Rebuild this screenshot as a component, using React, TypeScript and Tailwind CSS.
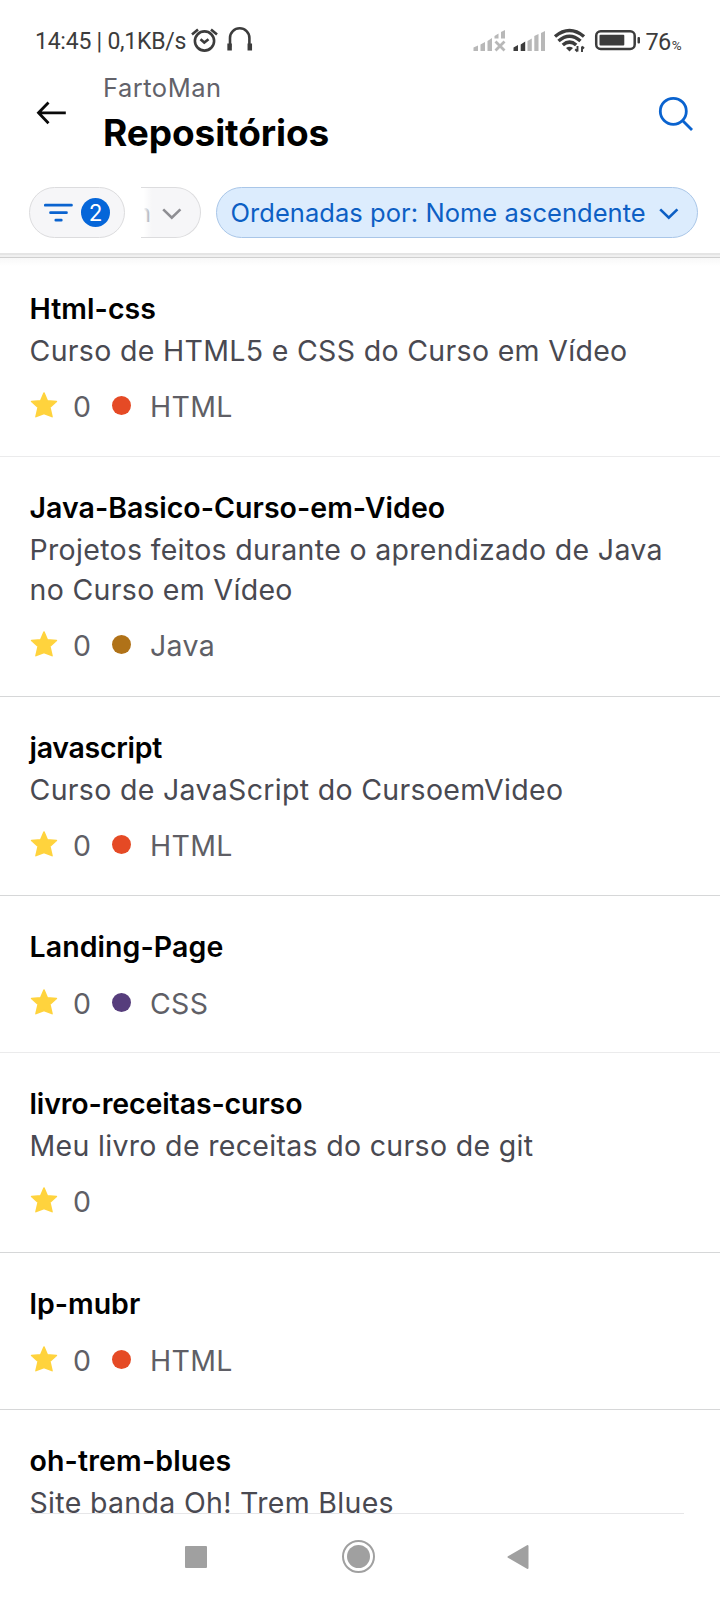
import React from "react";

type Repo = {
  name: string;
  tracking: string;
  desc?: string;
  stars?: number;
  lang?: string;
  dot?: string;
  box: string;
};

const repos: Repo[] = [
  { name: "Html-css", tracking: "tracking-[0.06px]", desc: "Curso de HTML5 e CSS do Curso em Vídeo", stars: 0, lang: "HTML", dot: "bg-[#e54a25]", box: "h-[199px] border-b border-[#ebebec]" },
  { name: "Java-Basico-Curso-em-Video", tracking: "tracking-[0.04px]", desc: "Projetos feitos durante o aprendizado de Java no Curso em Vídeo", stars: 0, lang: "Java", dot: "bg-[#b07218]", box: "h-[240px] border-b border-[#d6d7d8]" },
  { name: "javascript", tracking: "tracking-[-0.28px]", desc: "Curso de JavaScript do CursoemVideo", stars: 0, lang: "HTML", dot: "bg-[#e54a25]", box: "h-[199px] border-b border-[#d6d7d8]" },
  { name: "Landing-Page", tracking: "tracking-[0.08px]", stars: 0, lang: "CSS", dot: "bg-[#563d7c]", box: "h-[157px] border-b border-[#ebebec]" },
  { name: "livro-receitas-curso", tracking: "tracking-[-0.12px]", desc: "Meu livro de receitas do curso de git", stars: 0, box: "h-[200px] border-b border-[#d6d7d8]" },
  { name: "lp-mubr", tracking: "tracking-normal", stars: 0, lang: "HTML", dot: "bg-[#e54a25]", box: "h-[157px] border-b border-[#d6d7d8]" },
  { name: "oh-trem-blues", tracking: "tracking-[0.15px]", desc: "Site banda Oh! Trem Blues", box: "h-[104px]" },
];

function Star() {
  return (
    <svg width="28" height="28" viewBox="0 0 28 28" className="mt-[3.5px] shrink-0">
      <path
        d="M14 2 17.3 9.8 26.4 10.5 19.8 16.3 22 25.6 14 22.6 6 25.6 8.2 16.3 1.6 10.5 10.7 9.8Z"
        fill="#ffd33d"
        stroke="#ffd33d"
        strokeWidth="1.6"
        strokeLinejoin="round"
      />
    </svg>
  );
}

function Chevron() {
  return (
    <svg width="20" height="12" viewBox="0 0 20 12" className="mt-[3px] shrink-0" fill="none" stroke="currentColor" strokeWidth="2.6">
      <path d="M1.2 1.4 9.8 9.8 18.4 1.4" />
    </svg>
  );
}

function StatusBar() {
  return (
    <div className="flex h-[70px] shrink-0 items-start pl-[35px] pt-[26px] font-[Roboto] text-[#3c3c3c]">
      <div className="mt-px w-[151px] whitespace-nowrap text-[23px] leading-[30px] tracking-[-0.24px]">14:45 | 0,1KB/s</div>
      <svg width="68" height="30" viewBox="186 26 68 30" fill="none" stroke="#3c3c3c">
        <circle cx="204.5" cy="41" r="9.6" strokeWidth="2.6" />
        <path d="M200.5 39.2 204.3 42.5 208.5 39.2" strokeWidth="2.6" />
        <path d="M192 34.5 198 29.5M217 34.5 211 29.5" strokeWidth="2.6" />
        <path d="M230 47V38A9.7 9.7 0 0 1 249.4 38V47" strokeWidth="2.6" />
        <path d="M229.6 43.5V50.5M249.8 43.5V50.5" strokeWidth="4.5" />
      </svg>
      <svg width="176" height="30" viewBox="466 26 176 30" className="ml-[212px]" fill="none">
        <path
          d="M473.5 47.5 478 45.5V51H473.5ZM480.5 44.5 485 42V51H480.5ZM487.5 41 492 38V51H487.5ZM494.5 36 498.5 33.5V38.5H494.5ZM501 32 505 30V38.5H501ZM527.5 41 531.8 38.5V51H527.5ZM534.3 36 538.5 34V51H534.3ZM541 33 545 31V51H541Z"
          fill="#b8b8b8"
        />
        <path d="M495.5 41.5 504.5 50.5M504.5 41.5 495.5 50.5" stroke="#b8b8b8" strokeWidth="2.8" />
        <path d="M513.5 47.5 518 45V51H513.5ZM520.7 44.5 525.2 41.5V51H520.7Z" fill="#3c3c3c" />
        <g stroke="#3c3c3c" strokeWidth="3.5">
          <path d="M555 36.5Q569.5 24.5 584 36.5" />
          <path d="M558.5 41Q569.5 31.5 580.5 41" />
          <path d="M562.8 45Q569.5 39.2 576.2 45" />
        </g>
        <path d="M566 48Q569.5 45.5 573 48L569.5 51.5Z" fill="#3c3c3c" />
        <path d="M577.5 46V51.5M575.2 49.3 577.5 51.5M582 52V46.5M582 46.5 584 48.5" stroke="#3c3c3c" strokeWidth="1.9" />
        <rect x="596.2" y="31.2" width="38.5" height="17.8" rx="4.5" stroke="#3c3c3c" strokeWidth="2.5" />
        <rect x="599.5" y="34.8" width="24.8" height="10.6" rx="1" fill="#3c3c3c" />
        <rect x="637.5" y="37" width="2.5" height="6.5" rx="1" fill="#3c3c3c" />
      </svg>
      <div className="ml-[3.5px] mt-px flex items-baseline leading-[30px]">
        <span className="text-[23.5px] tracking-[-0.6px]">76</span>
        <span className="ml-px text-[13.5px]">%</span>
      </div>
    </div>
  );
}

function Header() {
  return (
    <header className="flex h-[117px] shrink-0 items-start">
      <svg width="32" height="26" viewBox="0 0 32 26" className="ml-[36px] mt-[30px] shrink-0" fill="none" stroke="#0a0a0a" strokeWidth="2.8">
        <path d="M12.5 2.5 2.5 12.8 12.5 23.2M2.5 12.8H29.8" />
      </svg>
      <div className="ml-[35px] w-[540px] pt-px">
        <p className="text-[25.5px] leading-[34px] tracking-[0.5px] text-[#62626a]">FartoMan</p>
        <h1 className="mt-[3px] text-[37px] font-bold leading-[50px] tracking-[-0.1px] text-black">Repositórios</h1>
      </div>
      <svg width="38" height="38" viewBox="0 0 38 38" className="ml-[14px] mt-[24.5px] shrink-0" fill="none" stroke="#0a63cf" strokeWidth="2.8">
        <circle cx="16.3" cy="16.3" r="13" />
        <path d="M25.5 25.5 35 35" />
      </svg>
    </header>
  );
}

function Filters() {
  return (
    <div className="flex h-[66px] shrink-0 items-start">
      <div className="ml-[29px] flex h-[51px] w-[96px] shrink-0 items-center rounded-full border border-[#dcdcde] bg-[#f6f6f8] pl-[14px]">
        <svg width="30" height="20" viewBox="0 0 30 20" fill="none" stroke="#0a63cf" strokeWidth="2.7" strokeLinecap="round">
          <path d="M1.3 2.2H27.5M6.5 9.7H22.5M11.8 17.2H17.3" />
        </svg>
        <span className="ml-[7px] flex h-[29px] w-[29px] items-center justify-center rounded-full bg-[#0566d9] text-[22.5px] leading-[31px] text-white">2</span>
      </div>
      <div className="relative ml-[16px] flex h-[51px] w-[60px] shrink-0 items-center justify-end overflow-hidden rounded-r-full border-y border-r border-[#dcdcde] bg-[#f6f6f8] pr-[18px] text-[#8e8e93]">
        <span className="mr-[11px] text-[25.5px] leading-[50px]">n</span>
        <Chevron />
        <span className="absolute -inset-y-px left-0 w-[11px] bg-linear-to-r from-white from-25% to-white/0" />
      </div>
      <div className="ml-[15px] flex h-[51px] w-[482px] shrink-0 items-center rounded-full border border-[#a9c6e8] bg-[#dcecfd] pl-[13.5px] text-[#0d5fc4]">
        <span className="w-[428px] whitespace-nowrap text-[25.5px] leading-[50px] tracking-[0.05px]">Ordenadas por: Nome ascendente</span>
        <Chevron />
      </div>
    </div>
  );
}

function RepoRow({ repo }: { repo: Repo }) {
  return (
    <li className={`shrink-0 pl-[29.5px] pr-[30px] pt-[30px] ${repo.box}`}>
      <h2 className={`text-[28.5px] font-semibold leading-[42px] text-black ${repo.tracking}`}>{repo.name}</h2>
      {repo.desc && <p className="mb-[2px] mt-px text-[28.5px] leading-[40px] tracking-[0.32px] text-[#494951]">{repo.desc}</p>}
      {repo.stars !== undefined && (
        <div className="mt-4 flex h-[40px] items-start text-[28.5px] leading-[40px] text-[#5f5f66]">
          <Star />
          <span className="ml-[15.5px] w-[20px]">0</span>
          {repo.lang && (
            <>
              <span className={`ml-[18.5px] mt-[8.5px] h-[19px] w-[19px] rounded-full ${repo.dot}`} />
              <span className="ml-[19.5px] tracking-[0.3px]">{repo.lang}</span>
            </>
          )}
        </div>
      )}
    </li>
  );
}

function NavBar() {
  return (
    <nav className="flex h-[86px] shrink-0 items-center bg-white pb-px pl-[184.5px]">
      <span className="h-[22px] w-[22px] rounded-[1px] bg-[#a0a0a0]" />
      <span className="ml-[135.5px] flex h-[33px] w-[33px] items-center justify-center rounded-full border-2 border-[#a0a0a0]">
        <span className="h-[23px] w-[23px] rounded-full bg-[#a0a0a0]" />
      </span>
      <svg width="24" height="26" viewBox="0 0 24 26" className="ml-[131px]">
        <path d="M2.5 13 21.5 2V24Z" fill="#a0a0a0" stroke="#a0a0a0" strokeWidth="2" strokeLinejoin="round" />
      </svg>
    </nav>
  );
}

export default function App() {
  return (
    <div className="flex h-[1600px] w-[720px] flex-col overflow-hidden bg-white font-[Inter,sans-serif]">
      <StatusBar />
      <Header />
      <Filters />
      <div className="h-[2px] shrink-0 bg-[#e5e5e5]" />
      <div className="h-[2px] shrink-0 bg-[#f0f0f0]" />
      <div className="h-px shrink-0 bg-[#d0d0d0]" />
      <ul className="flex h-[1255px] shrink-0 flex-col bg-[linear-gradient(#f8f8f8,#ffffff_8px)]">
        {repos.map((repo) => (
          <RepoRow key={repo.name} repo={repo} />
        ))}
      </ul>
      <div className="ml-[30px] h-px w-[654px] shrink-0 bg-[#e6e6e8]" />
      <NavBar />
    </div>
  );
}
